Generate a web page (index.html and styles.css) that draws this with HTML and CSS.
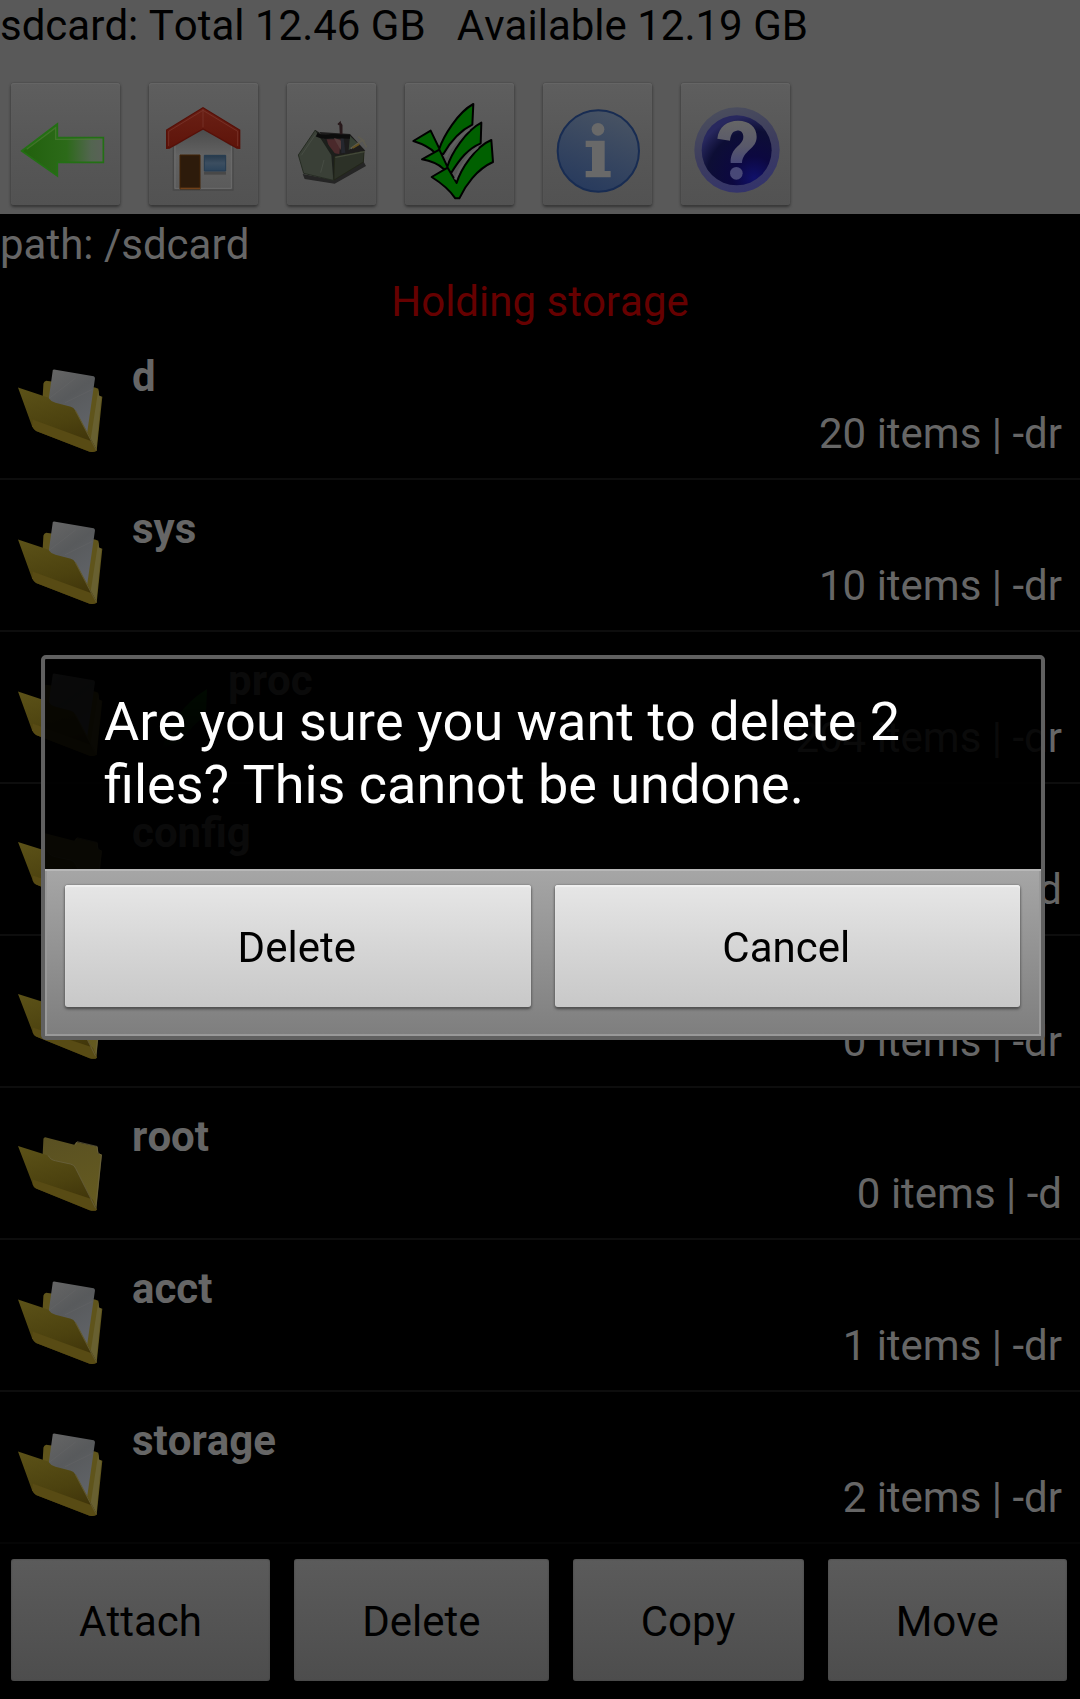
FILE: index.html
```html
<!DOCTYPE html>
<html lang="en">
<head>
<meta charset="utf-8">
<meta name="viewport" content="width=device-width, initial-scale=1">
<title>File manager</title>
<link rel="stylesheet" href="styles.css">
</head>
<body>
<svg class="defs" aria-hidden="true">
  <defs>
    <linearGradient id="front" x1="0" y1="0" x2="0.3" y2="1">
      <stop offset="0" stop-color="#5c5218"/><stop offset="0.65" stop-color="#4c420f"/><stop offset="1" stop-color="#40350a"/>
    </linearGradient>
    <linearGradient id="back" x1="0" y1="0" x2="0.3" y2="1">
      <stop offset="0" stop-color="#595022"/><stop offset="1" stop-color="#645a20"/>
    </linearGradient>
    <linearGradient id="paper" x1="0" y1="0" x2="0.5" y2="1">
      <stop offset="0" stop-color="#666"/><stop offset="0.5" stop-color="#585a5c"/><stop offset="1" stop-color="#5f6266"/>
    </linearGradient>
    <linearGradient id="blade" x1="0" y1="0" x2="0" y2="1">
      <stop offset="0" stop-color="#006000"/><stop offset="1" stop-color="#001000"/>
    </linearGradient>
    <symbol id="folder" viewBox="0 0 260 260">
      <path d="M72 120 76 38Q78 32 84 34L168 56 174 48 238 62 240 82 251 85 234 250 224 250Z" fill="url(#back)"/>
      <path d="M172 56 177 47 236 61 239 80 249 87 232 246" fill="none" stroke="#6c6546" stroke-width="2"/>
      <path d="M0 60 90 88Q98 102 112 104L158 114Q168 116 172 126L236 250Q230 256 214 252L54 187Q46 182 44 174Z" fill="url(#front)"/>
      <path d="M44 160 224 220 236 250Q230 256 214 252L54 187Q46 182 44 174Z" fill="#584b14"/>
      <path d="M90 88Q98 102 112 104L158 114Q168 116 172 126L232 246" fill="none" stroke="#6c6546" stroke-width="2"/>
    </symbol>
    <symbol id="folder-full" viewBox="0 0 260 260">
      <path d="M72 120 76 52Q78 46 84 44L230 64 240 68 242 88 252 92 235 254 224 254Z" fill="#5f541b"/>
      <path d="M240 70 242 88 249 93 234 250 214 240Z" fill="#686030"/>
      <path d="M104 12Q106 9 112 11L226 31Q230 32 230 37L206 204 90 112Z" fill="url(#paper)"/>
      <path d="M94 96 172 36M140 110 222 70" stroke="#6b6b6c" stroke-width="2" opacity="0.5"/>
      <path d="M0 64 90 94Q98 106 112 110L158 122Q166 124 172 134L236 252Q230 260 214 256L54 194Q46 188 42 180Z" fill="url(#front)"/>
      <path d="M44 160 222 226 236 252Q230 260 214 256L54 194Q46 188 42 180Z" fill="#584b14"/>
      <path d="M172 134 210 206 234 252" fill="none" stroke="#62592f" stroke-width="3"/>
    </symbol>
  </defs>
</svg>

<header class="top">
  <p class="line storage">sdcard: Total 12.46 GB   Available 12.19 GB</p>
  <nav class="tools" aria-label="Tools">
    <button class="tool" type="button" aria-label="Back">
      <svg viewBox="33 249 327 366">
        <defs>
          <linearGradient id="ag" x1="0" x2="1"><stop offset="0.1" stop-color="#23620f"/><stop offset="0.55" stop-color="#2c6a19"/><stop offset="0.85" stop-color="#536550"/><stop offset="1" stop-color="#5a6158"/></linearGradient>
        </defs>
        <path d="M65 453 172 372V413H310V487H172V528Z" fill="url(#ag)" stroke="#237014" stroke-width="5"/>
        <path d="M80 448 167 383V418H300" fill="none" stroke="#4b7c33" stroke-width="4" opacity="0.7"/>
      </svg>
    </button>
    <button class="tool" type="button" aria-label="Home">
      <svg viewBox="447 249 327 366">
        <defs>
          <linearGradient id="wall" x1="0" y1="0" x2="0" y2="1"><stop offset="0" stop-color="#494949"/><stop offset="0.45" stop-color="#626262"/><stop offset="1" stop-color="#5a5a5a"/></linearGradient>
          <linearGradient id="win" x1="0" y1="0" x2="0" y2="1"><stop offset="0" stop-color="#26394b"/><stop offset="0.5" stop-color="#3c4e60"/><stop offset="1" stop-color="#2b435a"/></linearGradient>
          <linearGradient id="roof" x1="0" y1="0" x2="0" y2="1"><stop offset="0" stop-color="#6a2015"/><stop offset="1" stop-color="#5e140a"/></linearGradient>
        </defs>
        <path d="M520 440 609 380 699 440V570H520Z" fill="url(#wall)" stroke="#484848" stroke-width="4"/>
        <path d="M525 436V565H694V436" fill="none" stroke="#6c6c6c" stroke-width="3"/>
        <path d="M500 390 609 323 719 390V445L711 444 609 387 508 444 500 445Z" fill="url(#roof)" stroke="#571008" stroke-width="4"/>
        <path d="M506 438V394L609 331 713 394V438M609 328V382" fill="none" stroke="#7d3a30" stroke-width="2"/>
        <path d="M540 465H600V567H540Z" fill="#2d1b0b" stroke="#422508" stroke-width="3"/>
        <path d="M541 565H600" stroke="#704019" stroke-width="4"/>
        <path d="M612 515H678V524H612Z" fill="#484848"/>
        <path d="M613 466H677V513H613Z" fill="url(#win)" stroke="#253b50" stroke-width="3"/>
      </svg>
    </button>
    <button class="tool tool-narrow" type="button" aria-label="Toolbox">
      <svg viewBox="861 249 267 366">
        <path d="M908 522 1000 540 1090 484 1098 498 1004 551 914 537Z" fill="#252525"/>
        <path d="M958 396 1050 402 1096 452 1004 470Z" fill="#1d1c1c"/>
        <path d="M980 418 1022 418 1018 462 992 458Z" fill="#4a292b"/>
        <path d="M1000 412 1026 424 1022 450Z" fill="#553a3a"/>
        <path d="M1022 404 1030 404 1036 458 1024 460Z" fill="#24262d"/>
        <path d="M1050 408 1078 434 1046 450Z" fill="#364034"/>
        <path d="M1052 446 1088 420 1100 442M1074 410 1094 424" stroke="#5f5c50" stroke-width="5" fill="none"/>
        <path d="M1058 444 1078 432" stroke="#63511f" stroke-width="6"/>
        <path d="M1022 404 1020 368 1014 374M1020 368 1025 376V404" fill="none" stroke="#28191b" stroke-width="5"/>
        <path d="M946 390 895 465 911 520 1000 541 1002 466Z" fill="#3a4037" stroke="#262c23" stroke-width="3"/>
        <path d="M946 391 956 396 1006 462 1000 541 994 466Z" fill="#1c1f1b"/>
        <path d="M904 466 946 404M972 480 962 518" stroke="#474d44" stroke-width="3"/>
        <path d="M1004 470 1092 454 1090 486 1002 540Z" fill="#2c3127" stroke="#222619" stroke-width="3"/>
        <path d="M1006 472 1094 455" stroke="#44493a" stroke-width="4"/>
        <path d="M950 404Q970 414 996 408L1050 410" fill="none" stroke="#0c0c0c" stroke-width="12"/>
      </svg>
    </button>
    <button class="tool" type="button" aria-label="Select all">
      <svg viewBox="15 249 327 366">
        <g fill="#006000" stroke="#000" stroke-width="6" stroke-linejoin="round">
          <path d="M40 423 92 392 118 446C130 410 172 338 220 312L217 374C180 392 152 424 130 462L104 458C88 440 62 430 40 423Z"/>
          <path d="M66 478 118 449 142 500C154 460 198 392 244 368L242 430C204 446 180 476 154 518L130 506C112 490 88 482 66 478Z"/>
          <path d="M95 531 143 503 170 549C182 508 226 440 274 420L279 486C230 508 196 556 178 595H166C148 568 122 548 95 531Z"/>
        </g>
        <path d="M137 472Q160 420 208 388M165 538Q190 476 234 441" fill="none" stroke="#606060" stroke-width="6"/>
      </svg>
    </button>
    <button class="tool" type="button" aria-label="Information">
      <svg viewBox="429 249 327 366">
        <defs><linearGradient id="ig" x1="0.7" y1="0" x2="0.3" y2="1"><stop offset="0" stop-color="#485363"/><stop offset="1" stop-color="#273a5d"/></linearGradient></defs>
        <circle cx="595" cy="453" r="122" fill="url(#ig)" stroke="#182c52" stroke-width="6"/>
        <circle cx="594" cy="388" r="19" fill="#696969"/>
        <path d="M557 422H614V513H632V532H557V513H576V441H557Z" fill="#696969"/>
      </svg>
    </button>
    <button class="tool" type="button" aria-label="Help">
      <svg viewBox="843 249 327 366">
        <defs>
          <linearGradient id="ring" x1="0.3" y1="0" x2="0.6" y2="1"><stop offset="0" stop-color="#4b4e5d"/><stop offset="0.5" stop-color="#3d3d5d"/><stop offset="1" stop-color="#33336b"/></linearGradient>
          <radialGradient id="ball" cx="0.75" cy="0.9" r="0.9"><stop offset="0" stop-color="#10106a"/><stop offset="0.35" stop-color="#0c0840"/><stop offset="0.75" stop-color="#0d0e35"/><stop offset="1" stop-color="#28285e"/></radialGradient>
          <linearGradient id="qm" x1="0" y1="0" x2="0" y2="1"><stop offset="0" stop-color="#666"/><stop offset="0.6" stop-color="#59596a"/><stop offset="1" stop-color="#484877"/></linearGradient>
        </defs>
        <circle cx="1011" cy="450" r="128" fill="url(#ring)"/>
        <circle cx="1010" cy="451" r="105" fill="url(#ball)"/>
        <path d="M952 416C956 380 982 362 1014 362C1048 362 1070 382 1070 410C1070 448 1028 450 1026 489H992C990 440 1030 438 1030 410C1030 396 1020 390 1010 392C996 394 992 406 990 422Z" fill="url(#qm)"/>
        <circle cx="1009" cy="520" r="19" fill="#484877"/>
      </svg>
    </button>
  </nav>
</header>

<main class="files">
  <p class="line path">path: /sdcard</p>
  <p class="line notice">Holding storage</p>
  <ul class="list">
    <li class="row"><svg class="folder"><use href="#folder-full"/></svg><div class="info"><strong class="name">d</strong><span class="meta">20 items | -dr</span></div></li>
    <li class="row"><svg class="folder"><use href="#folder-full"/></svg><div class="info"><strong class="name">sys</strong><span class="meta">10 items | -dr</span></div></li>
    <li class="row"><svg class="folder"><use href="#folder-full"/></svg>
      <svg class="mark" viewBox="0 0 96 96"><path d="M75 1Q57 12 46 28 36 42 30 60L50 54Q60 36 74 28Z" fill="url(#blade)"/></svg>
      <div class="info"><strong class="name">proc</strong><span class="meta">204 items | -dr</span></div></li>
    <li class="row"><svg class="folder"><use href="#folder"/></svg><div class="info"><strong class="name">config</strong><span class="meta">0 items | -d</span></div></li>
    <li class="row"><svg class="folder"><use href="#folder"/></svg><div class="info"><strong class="name"></strong><span class="meta">0 items | -dr</span></div></li>
    <li class="row"><svg class="folder"><use href="#folder"/></svg><div class="info"><strong class="name">root</strong><span class="meta">0 items | -d</span></div></li>
    <li class="row"><svg class="folder"><use href="#folder-full"/></svg><div class="info"><strong class="name">acct</strong><span class="meta">1 items | -dr</span></div></li>
    <li class="row"><svg class="folder"><use href="#folder-full"/></svg><div class="info"><strong class="name">storage</strong><span class="meta">2 items | -dr</span></div></li>
  </ul>
</main>

<footer class="actions">
  <button class="action" type="button">Attach</button>
  <button class="action" type="button">Delete</button>
  <button class="action" type="button">Copy</button>
  <button class="action" type="button">Move</button>
</footer>

<div class="overlay">
  <section class="dialog" role="alertdialog" aria-modal="true" aria-describedby="question">
    <p class="question" id="question">Are you sure you want to delete 2 files? This cannot be undone.</p>
    <div class="choices">
      <button class="choice" type="button">Delete</button>
      <button class="choice" type="button">Cancel</button>
    </div>
  </section>
</div>
</body>
</html>
```
FILE: styles.css
```css
* {
  box-sizing: border-box;
}

body {
  display: flex;
  flex-direction: column;
  min-height: 100vh;
  margin: 0;
  background: #000;
  color: #666;
  font: 42px/50px Roboto, "Noto Sans", sans-serif;
  font-kerning: none;
}

button {
  border: 0;
  color: #000;
  font: inherit;
  font-kerning: none;
}

.defs {
  position: absolute;
  width: 0;
  height: 0;
}

.line {
  margin: 0;
}

/* Top bar */

.top {
  padding: 1px 0 9px;
  background: #595959;
}

.storage {
  color: #000;
  white-space: pre;
}

.tools {
  display: flex;
  gap: 29px;
  padding: 32px 11px 0;
}

.tool {
  width: 109px;
  height: 122px;
  padding: 0;
  border-radius: 3px;
  background: linear-gradient(#5e5e5e, #575757 50%, #525252);
  box-shadow: 0 0 2px #404040, 0 2px 3px #333, inset 0 1px 1px #666;
}

.tool-narrow {
  width: 89px;
}

.tool svg {
  display: block;
  width: 100%;
  height: 100%;
}

/* File list */

.files {
  flex: 1;
  padding-top: 6px;
}

.notice {
  margin-top: 7px;
  color: #600;
  text-align: center;
}

.list {
  margin: 1px 0 0;
  padding: 0;
  list-style: none;
}

.row {
  display: flex;
  height: 152px;
  padding: 24px 18px 0;
  border-bottom: 2px solid #0d0d0d;
}

.row:last-child {
  border-bottom-color: #050505;
}

.folder {
  width: 87px;
  height: 87px;
  margin: 14px 27px 0 0;
}

.mark {
  width: 96px;
  height: 96px;
  margin-top: 32px;
}

.info {
  display: flex;
  flex: 1;
  flex-direction: column;
  gap: 7px;
}

.name {
  min-height: 50px;
  font-weight: 700;
}

.meta {
  text-align: right;
}

/* Bottom actions */

.actions {
  display: flex;
  gap: 24px;
  padding: 15px 13px 18px 11px;
}

.action {
  flex: 1 1 auto;
  height: 122px;
  padding: 4px 0 0;
  border-radius: 3px;
  background: linear-gradient(#5b5b5b, #545454 50%, #4d4d4d);
  box-shadow: inset 0 0 2px #404040;
}

/* Confirmation dialog */

.overlay {
  position: fixed;
  inset: 0;
  display: flex;
  align-items: center;
  padding: 0 35px 4px 41px;
}

.dialog {
  flex: 1;
  border: 4px solid #606060;
  border-radius: 5px;
  background: rgba(0, 0, 0, 0.9);
  box-shadow: inset 0 0 1px #222;
}

.question {
  margin: 0;
  padding: 31px 60px 53px 59px;
  color: #fff;
  font-size: 54px;
  line-height: 63px;
}

.choices {
  display: flex;
  gap: 24px;
  padding: 16px 21px 29px 20px;
  background: linear-gradient(#a6a6a6, #7e7e7e);
  box-shadow: inset 0 2px #b8b8b8, inset 0 0 0 2px #999;
}

.choice {
  flex: 1;
  height: 122px;
  padding: 4px 2px 0 0;
  border-radius: 3px;
  background: linear-gradient(#e6e6e6, #d6d6d6 50%, #c8c8c8);
  box-shadow: 0 0 2px #666, 0 2px 3px #444, inset 0 2px 1px #f0f0f0;
}
```
